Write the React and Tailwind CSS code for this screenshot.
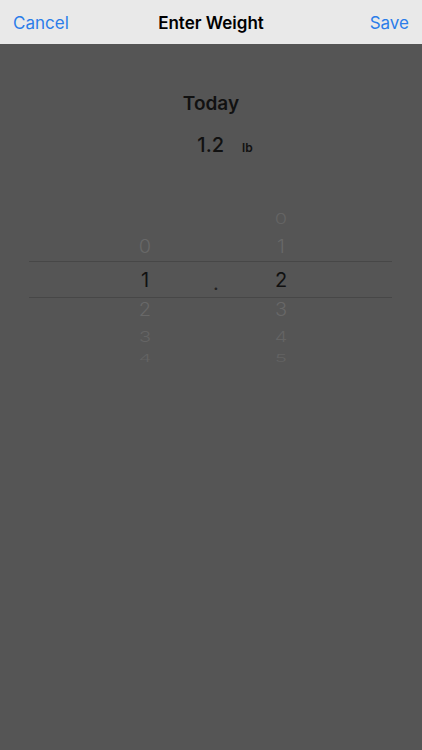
import React from "react";

const rowsAbove = [
  { h: "h-[28px]", l: "", r: "0", cls: "text-[#646464] scale-y-[0.72]" },
  { h: "h-[28px]", l: "0", r: "1", cls: "text-[#686868] scale-y-[0.9]" },
];
const rowsBelow = [
  { h: "h-[24px]", l: "2", r: "3", cls: "text-[#686868] scale-y-[0.9]" },
  { h: "h-[30px]", l: "3", r: "4", cls: "text-[#646464] scale-y-[0.72]" },
  { h: "h-[12px]", l: "4", r: "5", cls: "text-[#636363] scale-y-[0.5]" },
];

function Row({ h, l, r, cls, mid = "" }) {
  return (
    <div className={`flex items-center pl-[87px] ${h} overflow-visible`}>
      <div className={`w-[58px] text-center text-[20px] font-light leading-none ${cls}`}>{l}</div>
      <div className={`w-[84px] text-center text-[20px] font-light leading-none ${cls}`}>{mid}</div>
      <div className={`w-[46px] text-center text-[20px] font-light leading-none ${cls}`}>{r}</div>
    </div>
  );
}

export default function App() {
  return (
    <div
      className="w-[422px] h-[750px] bg-[#555555] flex flex-col"
      style={{ fontFamily: "Inter, 'Noto Sans', sans-serif" }}
    >
      <div className="h-[44px] bg-[#e9e9e9] grid grid-cols-[1fr_auto_1fr] items-center px-[13px] pt-[3px] shrink-0">
        <span className="text-[17px] text-[#2b7de9] justify-self-start">Cancel</span>
        <span className="text-[17px] font-semibold text-black">Enter Weight</span>
        <span className="text-[17px] text-[#2b7de9] justify-self-end">Save</span>
      </div>

      <div className="flex flex-col items-center pt-[48px]">
        <div className="text-[19px] font-semibold text-[#111] leading-[24px]">Today</div>
        <div className="flex items-end mt-[16px] pl-[28px]">
          <span className="text-[20px] font-medium text-[#111] leading-[26px]">1.2</span>
          <span className="text-[12px] font-semibold text-[#111] ml-[18px] mb-[2px] leading-[16px]">lb</span>
        </div>
      </div>

      <div className="mt-[47px] mx-[29px] w-[363px] flex flex-col">
        {rowsAbove.map((r, i) => (
          <Row key={i} {...r} />
        ))}
        <div className="border-y border-[#474747]">
          <div className="flex items-center pl-[87px] h-[35px]">
            <div className="w-[58px] text-center text-[20px] leading-none text-[#111]">1</div>
            <div className="w-[84px] text-center text-[20px] leading-none text-[#222] pt-[6px]">.</div>
            <div className="w-[46px] text-center text-[20px] leading-none text-[#111]">2</div>
          </div>
        </div>
        {rowsBelow.map((r, i) => (
          <Row key={i} {...r} />
        ))}
      </div>
    </div>
  );
}
